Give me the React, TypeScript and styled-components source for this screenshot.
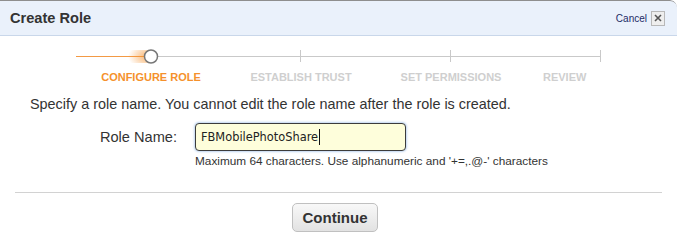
import React from 'react';
import styled, { createGlobalStyle } from 'styled-components';

const GlobalStyle = createGlobalStyle`
  html, body {
    margin: 0;
    padding: 0;
    background: #fff;
  }
  body {
    font-family: "Liberation Sans", Arial, Helvetica, sans-serif;
    color: #333;
  }
`;

const Dialog = styled.div`
  width: 677px;
  height: 241px;
  background: #fff;
  overflow: hidden;
  border-top-right-radius: 7px;
`;

const Header = styled.div`
  height: 34px;
  display: flex;
  align-items: center;
  justify-content: space-between;
  padding: 0 12px 0 10px;
  background: #eaf1fb;
  border-top: 1px solid #8e8e8e;
  border-bottom: 1px solid #c9d7ea;
  border-top-right-radius: 7px;
`;

const Title = styled.h1`
  margin: 0;
  font-size: 14.6px;
  font-weight: bold;
  color: #333;
`;

const CancelBox = styled.div`
  display: flex;
  align-items: center;
  gap: 4px;
`;

const CancelLink = styled.a`
  font-size: 10px;
  color: #1d2b66;
  text-decoration: none;
`;

const CloseButton = styled.span`
  display: flex;
  align-items: center;
  justify-content: center;
  width: 12px;
  height: 13px;
  background: #eeeeee;
  border: 1px solid #b8b8b8;
`;

const Track = styled.svg`
  display: block;
  margin-top: 10px;
`;

const StepLabels = styled.div`
  display: grid;
  grid-template-columns: repeat(4, 150px);
  margin: 4px 0 0 76px;
`;

const StepLabel = styled.div<{ $active?: boolean; $indent?: number }>`
  font-size: 11px;
  line-height: 14px;
  font-weight: bold;
  white-space: nowrap;
  text-align: ${(p) => (p.$indent ? 'left' : 'center')};
  padding-left: ${(p) => p.$indent ?? 0}px;
  color: ${(p) => (p.$active ? '#f5912c' : '#cfcfcf')};
`;

const Intro = styled.p`
  margin: 11px 0 0 30px;
  font-size: 14.4px;
  line-height: 18px;
`;

const FormRow = styled.div`
  display: grid;
  grid-template-columns: 177px 211px;
  column-gap: 18px;
  align-items: center;
  margin-top: 10px;
`;

const FieldLabel = styled.label`
  font-size: 14.6px;
  text-align: right;
`;

const Field = styled.div`
  box-sizing: border-box;
  height: 28px;
  display: flex;
  align-items: center;
  padding-left: 5px;
  background: #fefedb;
  border: 1px solid #3c3c3c;
  border-radius: 4px;
  box-shadow: 0 0 2px 1px rgba(150, 185, 230, 0.6);
  font-family: "DejaVu Sans", Verdana, sans-serif;
  font-size: 11.4px;
  color: #222;
`;

const Caret = styled.span`
  display: inline-block;
  width: 1px;
  height: 16px;
  margin-left: 1px;
  background: #111;
`;

const Help = styled.div`
  grid-column: 2 / span 1;
  width: 420px;
  margin-top: 3px;
  font-size: 11.8px;
  line-height: 14px;
  color: #333;
`;

const Divider = styled.hr`
  margin: 24px 15px 0;
  border: 0;
  border-top: 1px solid #d2d2d2;
`;

const Footer = styled.div`
  display: flex;
  justify-content: center;
  padding-right: 7px;
  margin-top: 10px;
`;

const Button = styled.button`
  width: 86px;
  height: 29px;
  font-family: inherit;
  font-size: 15px;
  font-weight: bold;
  color: #333;
  background: linear-gradient(#f8f8f8, #e2e2e2);
  border: 1px solid #c0c0c0;
  border-radius: 5px;
`;

const steps = [
  { name: 'CONFIGURE ROLE', active: true },
  { name: 'ESTABLISH TRUST' },
  { name: 'SET PERMISSIONS' },
  { name: 'REVIEW', indent: 17 },
];

function Stepper() {
  return (
    <>
      <Track width="677" height="20" viewBox="0 46 677 20">
        <defs>
          <radialGradient id="glow" cx="1" cy="0.5" r="1">
            <stop offset="0" stopColor="#f5912c" stopOpacity="0.7" />
            <stop offset="1" stopColor="#f5912c" stopOpacity="0" />
          </radialGradient>
        </defs>
        <line x1="76" y1="56.5" x2="145" y2="56.5" stroke="#f39a45" />
        <rect x="128" y="50" width="20" height="13" fill="url(#glow)" />
        <line x1="158" y1="56.5" x2="600" y2="56.5" stroke="#c9c9c9" />
        {[300.5, 450.5, 600.5].map((x) => (
          <line key={x} x1={x} y1="50" x2={x} y2="62" stroke="#c9c9c9" />
        ))}
        <circle cx="151" cy="56.5" r="6.5" fill="#fff" stroke="#777" strokeWidth="1.5" />
      </Track>
      <StepLabels>
        {steps.map((s) => (
          <StepLabel key={s.name} $active={s.active} $indent={s.indent}>
            {s.name}
          </StepLabel>
        ))}
      </StepLabels>
    </>
  );
}

export default function App() {
  return (
    <>
      <GlobalStyle />
      <Dialog>
        <Header>
          <Title>Create Role</Title>
          <CancelBox>
            <CancelLink href="#">Cancel</CancelLink>
            <CloseButton>
              <svg width="8" height="8" viewBox="0 0 8 8">
                <path d="M1 1 L7 7 M7 1 L1 7" stroke="#555" strokeWidth="1.6" />
              </svg>
            </CloseButton>
          </CancelBox>
        </Header>
        <Stepper />
        <Intro>Specify a role name. You cannot edit the role name after the role is created.</Intro>
        <FormRow>
          <FieldLabel>Role Name:</FieldLabel>
          <Field>
            FBMobilePhotoShare
            <Caret />
          </Field>
          <Help>Maximum 64 characters. Use alphanumeric and '+=,.@-' characters</Help>
        </FormRow>
        <Divider />
        <Footer>
          <Button>Continue</Button>
        </Footer>
      </Dialog>
    </>
  );
}
